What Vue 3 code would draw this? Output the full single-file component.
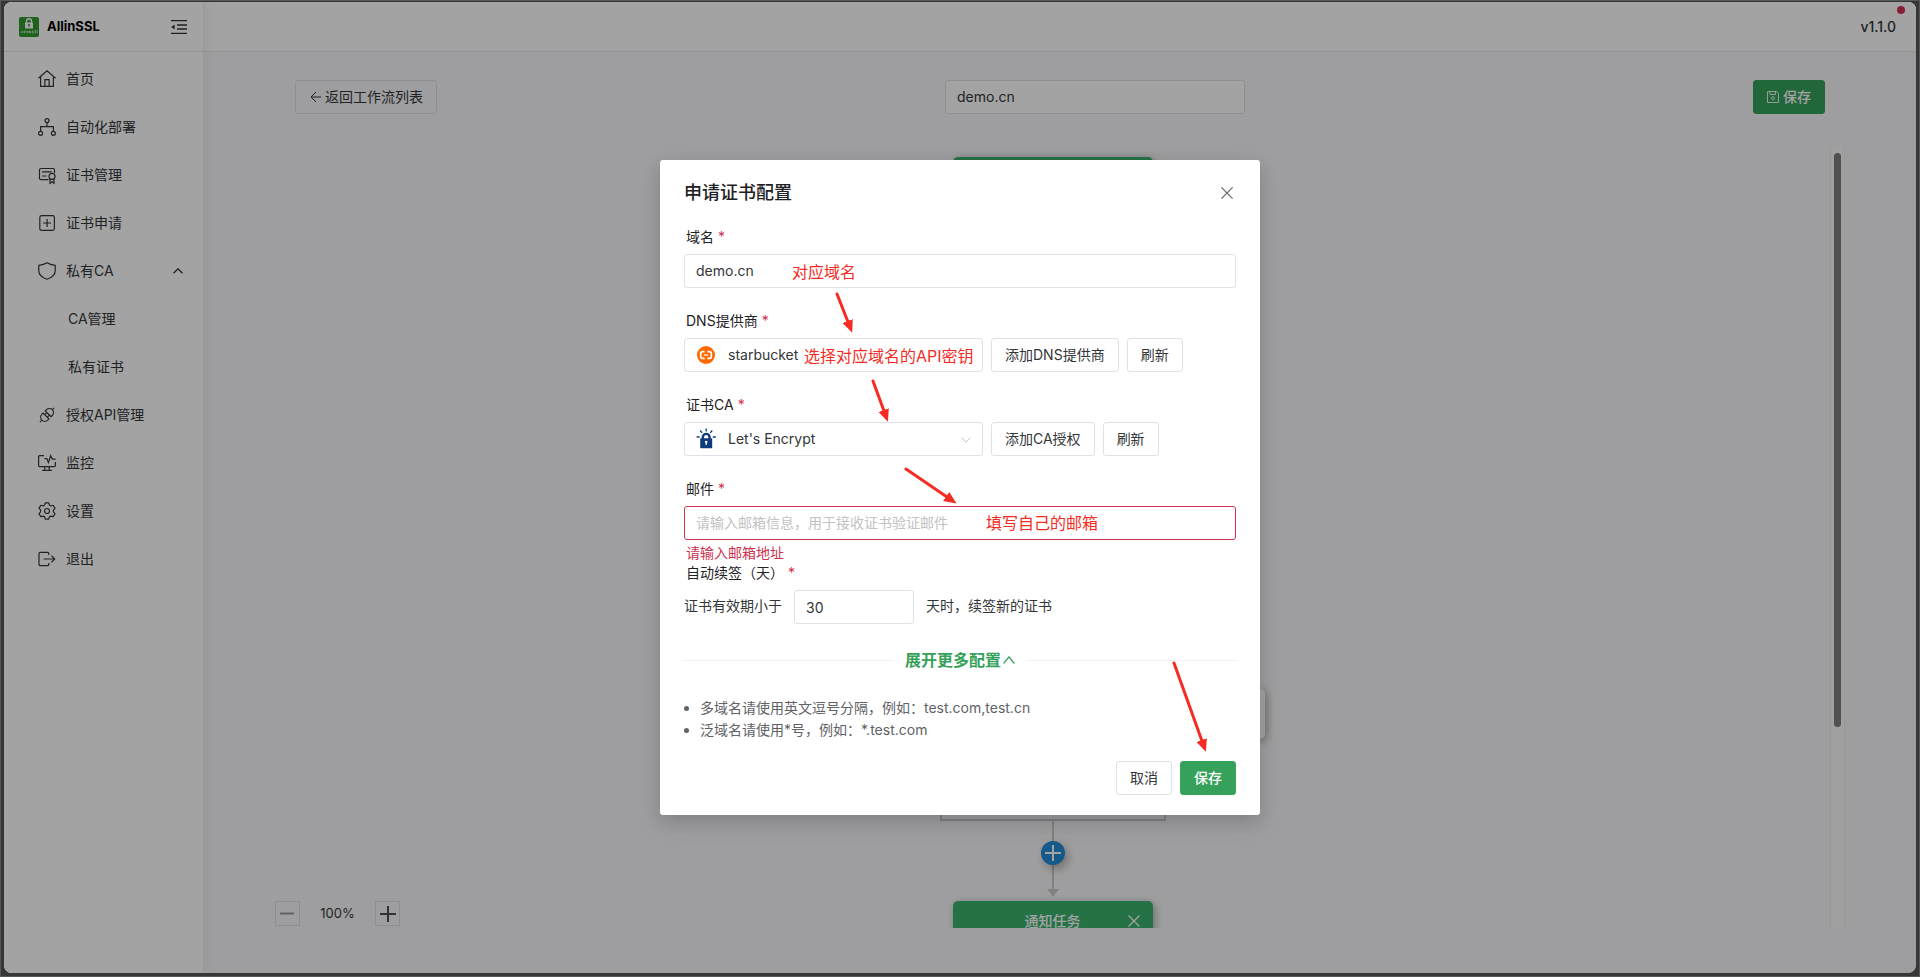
<script setup>
import { ref } from 'vue'

const menu = [
  { label: '首页', icon: 'home' },
  { label: '自动化部署', icon: 'flow' },
  { label: '证书管理', icon: 'cert' },
  { label: '证书申请', icon: 'plus' },
  { label: '私有CA', icon: 'shield', open: true },
  { label: 'CA管理', child: true },
  { label: '私有证书', child: true },
  { label: '授权API管理', icon: 'plug' },
  { label: '监控', icon: 'monitor' },
  { label: '设置', icon: 'gear' },
  { label: '退出', icon: 'exit' },
]

const workflowName = ref('demo.cn')
const domain = ref('demo.cn')
const provider = ref('starbucket')
const ca = ref("Let's Encrypt")
const email = ref('')
const days = ref('30')
</script>

<template>
  <div class="frame">
    <div class="shell">
      <aside class="sidebar">
        <div class="brand">
          <svg class="logo" viewBox="0 0 20 20" aria-hidden="true">
            <rect width="20" height="20" rx="2" fill="#2f9a2f" />
            <path d="M7.5 6V4.3a2.5 2.5 0 0 1 5 0V6" fill="none" stroke="#fff" stroke-width="1.4" />
            <rect x="6" y="5.5" width="8" height="6" rx=".6" fill="#fff" />
            <path d="M10 7v2.6" stroke="#2f9a2f" stroke-width="1.6" />
            <path d="M2.2 16l1.2-2 .8 2M5.4 13.5V16M7 13.5V16M8.6 14v2M10 16v-2l1.5 2v-2M14.5 14h-1.3l1 2h-1.3M17 13.6h-1l.7 2.4h-1M18.2 13.4V16" fill="none" stroke="#d6efd6" stroke-width=".8" />
          </svg>
          <span class="brand-name">AllinSSL</span>
          <button class="fold" aria-label="收起菜单">
            <svg width="16" height="16" viewBox="0 0 16 16" fill="none" stroke="#333639" stroke-width="1.3">
              <path d="M0 1.6h16M6 6h10M6 10h10M0 14.4h16" />
              <path d="M3.6 5.4v5.2L.2 8z" fill="#333639" stroke="none" />
            </svg>
          </button>
        </div>
        <nav class="menu">
          <a v-for="m in menu" :key="m.label" href="#" :class="['item', { child: m.child }]">
            <svg v-if="m.icon" class="icon" viewBox="0 0 18 18" aria-hidden="true">
              <path v-if="m.icon === 'home'" d="M.4 8.3L9 .9l8.600 7.400M2.600 6.800v9.600h12.800V6.800M6.900 16.400V9.600h4.200v6.800" />
              <g v-else-if="m.icon === 'flow'">
                <circle cx="9" cy="2.600" r="2" /><circle cx="2.600" cy="15.300" r="2" /><circle cx="15.400" cy="15.300" r="2" />
                <path d="M9 4.600v4.100M2.600 13.300V8.700h12.800v4.600" />
              </g>
              <g v-else-if="m.icon === 'cert'">
                <path d="M10.400 13.700H3A1.500 1.500 0 0 1 1.500 12.200V4A1.500 1.500 0 0 1 3 2.500h12A1.500 1.500 0 0 1 16.500 4v3M4 5.800h9.700M4 10h4.600" />
                <circle cx="14" cy="10.400" r="3" />
                <path d="M12 12.800v4.400l2-1.500 2 1.500v-4.400" />
              </g>
              <g v-else-if="m.icon === 'plus'">
                <rect x="1.800" y="1.700" width="14.600" height="14.600" rx="1.800" /><path d="M9.100 5v8M5.100 9h8" />
              </g>
              <path v-else-if="m.icon === 'shield'" d="M9 .8C6.400 2.400 3.600 3 .8 3.300V9c0 4.200 4.200 6.800 8.200 8.200 4-1.400 8.200-4 8.200-8.200V3.300C14.400 3 11.600 2.400 9 .8z" />
              <g v-else-if="m.icon === 'plug'" transform="rotate(-45 9 9)">
                <path d="M7.600 4.900H5.800a4.100 4.100 0 0 0 0 8.200h1.800zM10.600 4.900h1.800a4.100 4.100 0 0 1 0 8.200h-1.800zM1.700 9H-1M16.500 9H19M7.600 7.200h3M7.600 10.800h3" />
              </g>
              <path v-else-if="m.icon === 'monitor'" d="M6 1.600H1.600a1 1 0 0 0-1 1v9a1 1 0 0 0 1 1h14.800a1 1 0 0 0 1-1V8M6.800 12.600v3.600M11.200 12.600v3.600M4.200 16.400h9.600M6.600 4.600h2.200l1.600 4 2.300-7 1.600 3.600h3.300" />
              <g v-else-if="m.icon === 'gear'">
                <circle cx="9" cy="9" r="2.500" />
                <path d="M7.200.8h3.600l.6 2.300 1.500.9 2.300-.7 1.800 3.100L15.400 8v1.900l1.600 1.700-1.800 3.100-2.300-.6-1.500.8-.6 2.300H7.200l-.6-2.300-1.500-.8-2.300.6L1 11.600l1.600-1.700V8L1 6.400l1.800-3.100 2.300.7 1.500-.9z" stroke-linejoin="round" />
              </g>
              <path v-else d="M10.800 5V3.600a1.300 1.300 0 0 0-1.300-1.300H2.300A1.300 1.300 0 0 0 1 3.600v10.800a1.300 1.300 0 0 0 1.300 1.300h7.200a1.300 1.300 0 0 0 1.300-1.300V13M5.600 9h11M13.400 5.700L16.700 9l-3.300 3.300" />
            </svg>
            <span>{{ m.label }}</span>
            <svg v-if="m.open" class="caret" viewBox="0 0 10 6" aria-hidden="true"><path d="M.5 5.300L5 .8l4.500 4.500" /></svg>
          </a>
        </nav>
      </aside>

      <div class="page">
        <header class="topbar">
          <span class="version">v1.1.0<i class="dot"></i></span>
        </header>
        <main class="main">
          <div class="toolbar">
            <button class="btn back">
              <svg width="12" height="12" viewBox="0 0 12 12" fill="none" stroke="currentColor"><path d="M12 6H2M7 1L2 6l5 5" /></svg>
              返回工作流列表
            </button>
            <input v-model="workflowName" class="input flow-name" aria-label="工作流名称">
            <button class="btn primary save-flow">
              <svg width="12" height="12" viewBox="0 0 12 12" fill="none" stroke="currentColor" stroke-width=".9"><path d="M.5.500h9l2 2v9H.5zM3 .5v3h5.500v-3" /><circle cx="6" cy="7.300" r="1.500" /></svg>
              保存
            </button>
          </div>
          <div class="workspace">
            <div class="canvas">
              <div class="node start"></div>
              <div class="branch"></div>
              <div class="node card"></div>
              <div class="line"></div>
              <button class="add" aria-label="添加节点">
                <svg width="16" height="16" viewBox="0 0 16 16" stroke="#fff" stroke-width="2"><path d="M8 0v16M0 8h16" /></svg>
              </button>
              <div class="arrow-tip"></div>
              <div class="node notify">
                <span>通知任务</span>
                <svg viewBox="0 0 12 12" fill="none" stroke="#fff" stroke-width="1.200"><path d="M.5.500l11 11M11.500.500l-11 11" /></svg>
              </div>
            </div>
            <div class="track"><div class="thumb"></div></div>
            <div class="zoom">
              <button aria-label="缩小"><svg width="15" height="15" viewBox="0 0 15 15" stroke="#999" stroke-width="2"><path d="M0 7.500h14" /></svg></button>
              <span>100%</span>
              <button aria-label="放大"><svg width="16" height="16" viewBox="0 0 16 16" stroke="#4c4f5a" stroke-width="2"><path d="M8 0v16M0 8h16" /></svg></button>
            </div>
          </div>
        </main>
      </div>

      <div class="mask">
        <section class="dialog" role="dialog" aria-labelledby="dialog-title">
          <div class="dialog-head">
            <h2 id="dialog-title">申请证书配置</h2>
            <button class="close" aria-label="关闭">
              <svg width="12" height="12" viewBox="0 0 12 12" fill="none" stroke="#666" stroke-width="1.200"><path d="M.4.400l11.200 11.200M11.600.400L.4 11.600" /></svg>
            </button>
          </div>

          <div class="field">
            <label for="domain">域名<em>*</em></label>
            <input id="domain" v-model="domain" class="input">
          </div>

          <div class="field">
            <label for="provider">DNS提供商<em>*</em></label>
            <div class="row">
              <div class="select">
                <svg class="select-icon" viewBox="0 0 18 18" aria-hidden="true">
                  <circle cx="9" cy="9" r="9" fill="#ff6a00" />
                  <path d="M7.600 5.700H5.400a1.700 1.700 0 0 0-1.700 1.700v3.200a1.700 1.700 0 0 0 1.700 1.700h2.200M10.400 5.700h2.200a1.700 1.700 0 0 1 1.700 1.700v3.200a1.700 1.700 0 0 1-1.700 1.700h-2.200" fill="none" stroke="#fff" stroke-width="1.700" />
                  <path d="M6.800 9h4.400" stroke="#fff" stroke-width="1.200" />
                </svg>
                <select id="provider" v-model="provider"><option>starbucket</option></select>
              </div>
              <button class="btn">添加DNS提供商</button>
              <button class="btn">刷新</button>
            </div>
          </div>

          <div class="field">
            <label for="ca">证书CA<em>*</em></label>
            <div class="row">
              <div class="select">
                <svg class="select-icon" viewBox="0 0 18 18" aria-hidden="true">
                  <path d="M5.800 9V7.300a3.400 3.400 0 0 1 6.800 0V9" fill="none" stroke="#0f3c78" stroke-width="2.400" />
                  <rect x="3.200" y="8.200" width="12" height="10" rx=".8" fill="#0f3c78" />
                  <circle cx="9.200" cy="12" r="1.300" fill="#fff" /><path d="M9.200 12v3" stroke="#fff" stroke-width="1.200" />
                  <path d="M9.200-1.500v3M3.200.5l2 2.400M15.200.5l-2 2.400M-.4 7h3M15.800 7h3" stroke="#0f3c78" stroke-width="1.300" />
                </svg>
                <select id="ca" v-model="ca"><option>Let's Encrypt</option></select>
                <svg class="select-caret" viewBox="0 0 10 6" aria-hidden="true"><path d="M.4.500L5 5.200 9.600.500" fill="none" stroke="#c2c2c2" /></svg>
              </div>
              <button class="btn">添加CA授权</button>
              <button class="btn">刷新</button>
            </div>
          </div>

          <div class="field">
            <label for="email">邮件<em>*</em></label>
            <input id="email" v-model="email" class="input invalid" placeholder="请输入邮箱信息，用于接收证书验证邮件">
            <p class="error">请输入邮箱地址</p>
          </div>

          <div class="field">
            <label for="days">自动续签（天）<em>*</em></label>
            <div class="renew">
              <span>证书有效期小于</span>
              <input id="days" v-model="days" class="input days">
              <span>天时，续签新的证书</span>
            </div>
          </div>

          <div class="more">
            <button>展开更多配置<svg width="12" height="8" viewBox="0 0 12 8" fill="none" stroke="currentColor" stroke-width="1.200"><path d="M.6 7.500L6 .8l5.400 6.700" /></svg></button>
          </div>

          <ul class="tips">
            <li>多域名请使用英文逗号分隔，例如：test.com,test.cn</li>
            <li>泛域名请使用*号，例如：*.test.com</li>
          </ul>

          <div class="actions">
            <button class="btn">取消</button>
            <button class="btn primary">保存</button>
          </div>

          <div class="notes">
            <svg viewBox="0 0 600 655" fill="#f52c24" stroke="#f52c24" stroke-width="3" stroke-linecap="round">
              <defs>
                <marker id="tip" markerUnits="userSpaceOnUse" markerWidth="14" markerHeight="12" refX="1" refY="6" orient="auto">
                  <path d="M0 0.500L12.500 6L0 11.500z" stroke="none" />
                </marker>
              </defs>
              <path d="M177 134L188 162" marker-end="url(#tip)" />
              <path d="M213 221L224 251" marker-end="url(#tip)" />
              <path d="M246 309L287 337" marker-end="url(#tip)" />
              <path d="M514 503L542 581" marker-end="url(#tip)" />
            </svg>
            <span class="note note-domain">对应域名</span>
            <span class="note note-provider">选择对应域名的API密钥</span>
            <span class="note note-email">填写自己的邮箱</span>
          </div>
        </section>
      </div>
    </div>
  </div>
</template>

<style>
body { background: #383a3a; }
</style>

<style scoped>
* { box-sizing: border-box; }
.frame {
  height: 100vh;
  padding: 2px 4px 4px;
  box-shadow: inset 0 0 0 1px #565858;
  background: #363737;
  font: 14px/22px Inter, "Noto Sans CJK SC", sans-serif;
  color: #333639;
}
button, input, select { font: inherit; color: inherit; }
button { padding: 0; border: 0; background: none; cursor: pointer; }
.shell {
  position: relative;
  display: flex;
  height: 100%;
  overflow: hidden;
  border-radius: 8px;
  background: #f8f8fa;
}
.sidebar {
  position: relative;
  flex: 0 0 200px;
  background: #fff;
  border-right: 1px solid #efeff5;
  box-shadow: 2px 0 12px rgba(29, 35, 41, .06);
}
.brand {
  display: flex;
  align-items: center;
  height: 50px;
  padding: 0 16px 0 15px;
  border-bottom: 1px solid #e6e6ec;
}
.logo { width: 20px; height: 20px; }
.brand-name { flex: 1; margin-left: 8px; padding-bottom: 1px; font-size: 13px; line-height: 20px; font-weight: 700; color: #000; }
.fold { display: flex; }
.menu { padding-top: 3px; }
.item {
  display: flex;
  align-items: center;
  height: 48px;
  padding: 0 20px 0 34px;
  color: #333639;
  text-decoration: none;
}
.item.child { padding-left: 64px; }
.icon { width: 18px; height: 18px; margin-right: 10px; overflow: visible; fill: none; stroke: #333639; stroke-width: 1.200; }
.caret { width: 10px; height: 6px; margin-left: auto; fill: none; stroke: #333639; stroke-width: 1.300; }
.page { flex: 1; display: flex; flex-direction: column; min-width: 0; }
.topbar {
  display: flex;
  align-items: center;
  justify-content: flex-end;
  height: 50px;
  padding: 0 20px;
  background: #fff;
  border-bottom: 1px solid #e6e6ec;
}
.version { position: relative; font-weight: 500; }
.dot { position: absolute; top: -10px; right: -9px; width: 8px; height: 8px; border-radius: 50%; background: #d03050; }
.main { flex: 1; display: flex; flex-direction: column; min-height: 0; padding: 28px 71px 45px; }
.toolbar { display: flex; align-items: center; justify-content: space-between; margin: 0 20px 33px; }
.btn {
  display: inline-flex;
  align-items: center;
  justify-content: center;
  height: 34px;
  padding: 0 13px;
  border: 1px solid #e0e0e6;
  border-radius: 3px;
  white-space: nowrap;
}
.btn.primary { border-color: #36a15a; background: #36a15a; color: #fff; font-weight: 500; }
.back { gap: 4px; }
.save-flow { gap: 4px; }
.input {
  width: 100%;
  height: 34px;
  padding: 0 11px 2px;
  border: 1px solid #e0e0e6;
  border-radius: 3px;
  background: transparent;
  outline: none;
}
.flow-name { width: 300px; background: #fff; }
.workspace { position: relative; flex: 1; display: flex; min-height: 0; }
.canvas { position: relative; flex: 1; overflow: hidden; }
.track { width: 15px; border: 1px solid #ededed; border-width: 0 1px; background: #fafafa; padding: 6px 3px; }
.thumb { height: calc(75% - 3px); border-radius: 4px; background: #7e7e7e; }
.node { position: absolute; left: 50%; width: 200px; margin-left: -100px; border-radius: 5px; box-shadow: 2px 2px 8px rgba(0, 0, 0, .3); }
.start { top: 10px; height: 80px; background: #3ab36f; }
.card { top: 542px; height: 50px; margin-left: 12px; background: #fff; }
.branch { position: absolute; top: 580px; left: 50%; width: 226px; height: 94px; margin-left: -113px; border: 2px solid #cacaca; }
.line { position: absolute; top: 674px; left: 50%; width: 2px; height: 70px; margin-left: -1px; background: #cacaca; }
.add {
  position: absolute;
  top: 694px;
  left: 50%;
  display: flex;
  align-items: center;
  justify-content: center;
  width: 24px;
  height: 24px;
  margin-left: -12px;
  border-radius: 50%;
  background: #238bd8;
  box-shadow: 3px 4px 10px rgba(0, 0, 0, .3);
}
.arrow-tip { position: absolute; top: 742px; left: 50%; margin-left: -6px; border: 6px solid transparent; border-top: 8px solid #cacaca; border-bottom: 0; }
.notify { top: 754px; display: flex; align-items: center; justify-content: center; height: 40px; background: #3ab36f; color: #fff; font-weight: 500; }
.notify svg { position: absolute; right: 13px; width: 12px; height: 12px; }
.zoom { position: absolute; left: 0; bottom: 2px; display: flex; align-items: center; font-size: 13px; }
.zoom button { display: flex; align-items: center; justify-content: center; width: 25px; height: 25px; border: 1px solid #dfdfe2; }
.zoom span { width: 75px; padding-bottom: 2px; text-align: center; }

.mask {
  position: absolute;
  inset: 0;
  display: flex;
  align-items: center;
  justify-content: center;
  background: rgba(0, 0, 0, .36);
}
.dialog {
  position: relative;
  width: 600px;
  padding: 20px 24px;
  border-radius: 3px;
  background: #fff;
  box-shadow: 0 6px 16px rgba(0, 0, 0, .12), 0 9px 28px rgba(0, 0, 0, .08);
}
.dialog-head { display: flex; align-items: center; justify-content: space-between; height: 26px; margin-bottom: 22px; }
h2 { margin: 0; font-size: 18px; font-weight: 500; color: #1f2225; }
.close { display: flex; padding: 3px; }
.field { position: relative; padding-bottom: 24px; }
label { display: block; height: 26px; padding-left: 2px; line-height: 18px; color: #1f2225; }
em { margin-left: 4px; font-style: normal; color: #d03050; }
.field > .input, .row, .renew { display: flex; }
.row { gap: 8px; }
.select { position: relative; width: 299px; }
.select select {
  width: 100%;
  height: 34px;
  padding: 0 30px 0 43px;
  appearance: none;
  border: 1px solid #e0e0e6;
  border-radius: 3px;
  background: #fff;
  outline: none;
}
.select-icon { position: absolute; top: 8px; left: 13px; width: 18px; height: 18px; overflow: visible; }
.select-caret { position: absolute; top: 15px; right: 12px; width: 10px; height: 6px; }
.invalid { border-color: #d03050; }
.invalid::placeholder { color: #c2c2c2; }
.error { position: absolute; left: 2px; bottom: 0; margin: 0; line-height: 22px; color: #d03050; }
.renew { align-items: center; gap: 12px; }
.renew span { padding-bottom: 2px; }
.days { width: 120px; padding-bottom: 0; }
.more { display: flex; align-items: center; gap: 13px; height: 24px; margin-bottom: 25px; }
.more::before, .more::after { content: ""; flex: 1; height: 1px; background: #efeff5; }
.more button { display: flex; align-items: center; gap: 2px; font-size: 16px; font-weight: 700; color: #36a15a; }
.tips { margin: 0 0 20px; padding-left: 16px; color: #606266; }
.actions { display: flex; justify-content: flex-end; gap: 8px; }
.notes { position: absolute; inset: 0; pointer-events: none; }
.notes > svg { display: block; width: 100%; height: 100%; }
.note { position: absolute; font-size: 16px; line-height: 24px; color: #f52c24; }
.note-domain { top: 100px; left: 132px; }
.note-provider { top: 184px; left: 144px; }
.note-email { top: 351px; left: 326px; }
</style>
